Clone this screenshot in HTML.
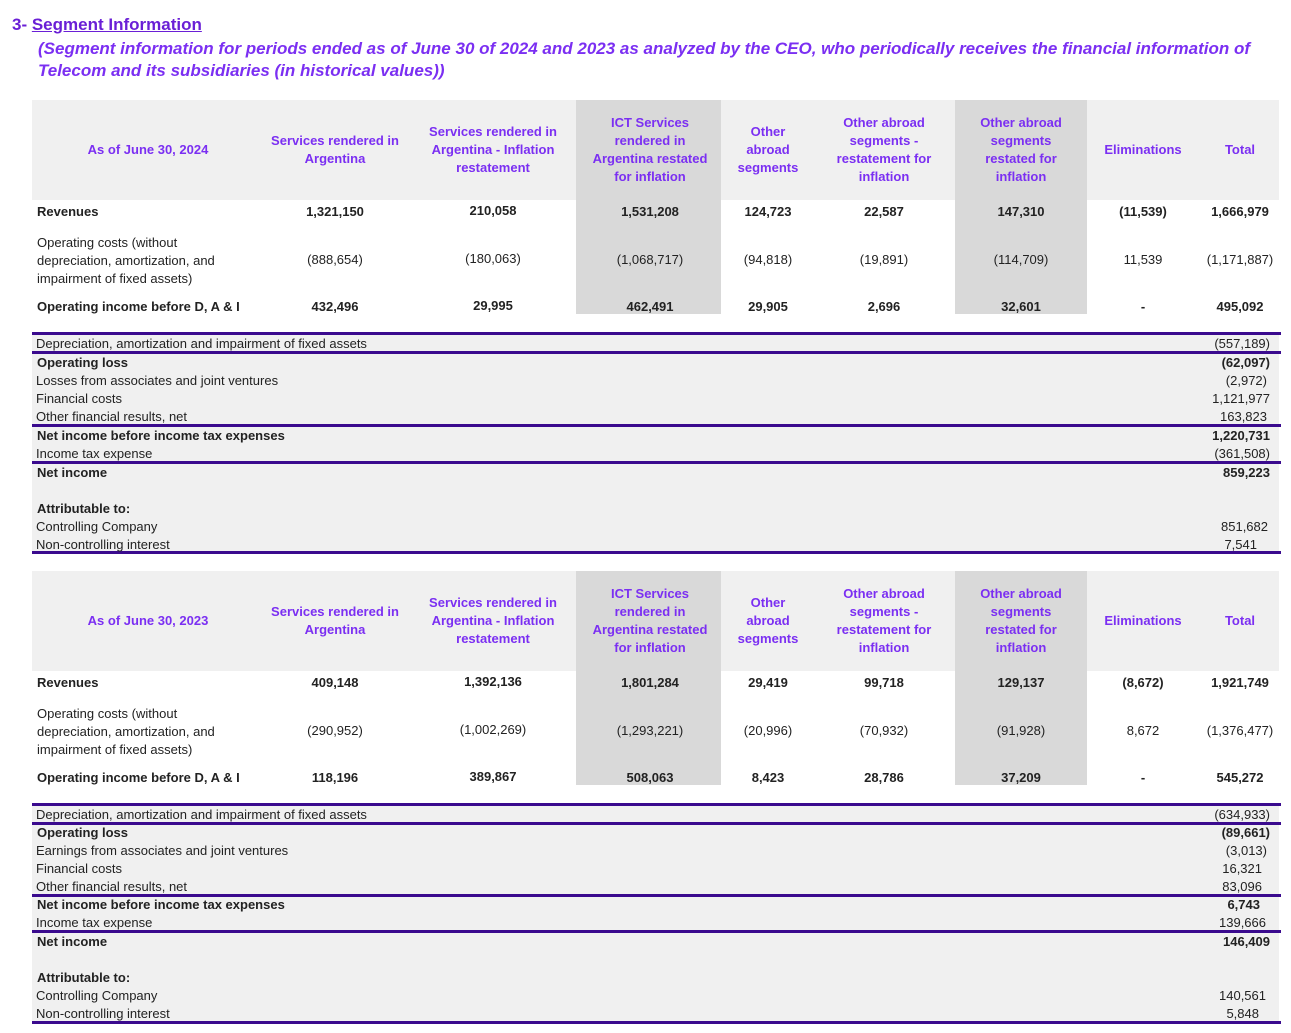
<!DOCTYPE html>
<html><head><meta charset="utf-8"><style>
body{margin:0;width:1291px;height:1033px;background:#fff;position:relative;font-family:"Liberation Sans",sans-serif;color:#222;overflow:hidden}
.a{position:absolute}
.t{position:absolute;white-space:nowrap;font-size:13px;line-height:16px}
.c{position:absolute;width:160px;margin-left:-80px;text-align:center;white-space:nowrap;font-size:13px;line-height:16px}
.h{position:absolute;width:150px;margin-left:-75px;text-align:center;font-size:13px;line-height:18px;color:#7b2ff2;font-weight:bold;display:flex;align-items:center;justify-content:center;height:100px}
.r{position:absolute;right:21px;text-align:right;white-space:nowrap;font-size:13px;line-height:16px}
.b{font-weight:bold}
.ln{position:absolute;left:32px;width:1249px;height:3px;background:#3a0a8e}
</style></head><body>
<div class="a" style="left:12px;top:15px;font-size:17px;font-weight:bold;color:#6a1fd6">3- <span style="text-decoration:underline">Segment Information</span></div>
<div class="a" style="left:38px;top:38px;font-size:17px;font-weight:bold;font-style:italic;color:#7b2ff2;line-height:22px;width:1235px">(Segment information for periods ended as of June 30 of 2024 and 2023 as analyzed by the CEO, who periodically receives the financial information of Telecom and its subsidiaries (in historical values))</div>

<!-- TABLE 1 -->
<div class="a" style="left:32px;top:100px;width:1247px;height:100px;background:#f0f0f0"></div>
<div class="a" style="left:576px;top:100px;width:145px;height:214px;background:#d9d9d9"></div>
<div class="a" style="left:955px;top:100px;width:132px;height:214px;background:#d9d9d9"></div>
<div class="h" style="left:148px;top:100px">As of June 30, 2024</div>
<div class="h" style="left:335px;top:100px">Services rendered in Argentina</div>
<div class="h" style="left:493px;top:100px">Services rendered in Argentina - Inflation restatement</div>
<div class="h" style="left:650px;top:100px;width:126px;margin-left:-63px">ICT Services rendered in Argentina restated for inflation</div>
<div class="h" style="left:768px;top:100px;width:80px;margin-left:-40px">Other abroad segments</div>
<div class="h" style="left:884px;top:100px;width:120px;margin-left:-60px">Other abroad segments - restatement for inflation</div>
<div class="h" style="left:1021px;top:100px;width:110px;margin-left:-55px">Other abroad segments restated for inflation</div>
<div class="h" style="left:1143px;top:100px">Eliminations</div>
<div class="h" style="left:1240px;top:100px">Total</div>

<div class="t b" style="left:37px;top:204px">Revenues</div>
<div class="c b" style="left:335px;top:204px">1,321,150</div><div class="c b" style="left:493px;top:203px">210,058</div><div class="c b" style="left:650px;top:204px">1,531,208</div><div class="c b" style="left:768px;top:204px">124,723</div><div class="c b" style="left:884px;top:204px">22,587</div><div class="c b" style="left:1021px;top:204px">147,310</div><div class="c b" style="left:1143px;top:204px">(11,539)</div><div class="c b" style="left:1240px;top:204px">1,666,979</div>
<div class="t" style="left:37px;top:234px;line-height:18px">Operating costs (without<br>depreciation, amortization, and<br>impairment of fixed assets)</div>
<div class="c" style="left:335px;top:252px">(888,654)</div><div class="c" style="left:493px;top:251px">(180,063)</div><div class="c" style="left:650px;top:252px">(1,068,717)</div><div class="c" style="left:768px;top:252px">(94,818)</div><div class="c" style="left:884px;top:252px">(19,891)</div><div class="c" style="left:1021px;top:252px">(114,709)</div><div class="c" style="left:1143px;top:252px">11,539</div><div class="c" style="left:1240px;top:252px">(1,171,887)</div>
<div class="t b" style="left:37px;top:299px">Operating income before D, A &amp; I</div>
<div class="c b" style="left:335px;top:299px">432,496</div><div class="c b" style="left:493px;top:298px">29,995</div><div class="c b" style="left:650px;top:299px">462,491</div><div class="c b" style="left:768px;top:299px">29,905</div><div class="c b" style="left:884px;top:299px">2,696</div><div class="c b" style="left:1021px;top:299px">32,601</div><div class="c b" style="left:1143px;top:299px">-</div><div class="c b" style="left:1240px;top:299px">495,092</div>

<div class="a" style="left:32px;top:333px;width:1247px;height:220px;background:#f0f0f0"></div>
<div class="ln" style="top:332px"></div><div class="ln" style="top:351px"></div><div class="ln" style="top:424px"></div><div class="ln" style="top:461px"></div><div class="ln" style="top:551px"></div>
<div class="t" style="left:36px;top:336px">Depreciation, amortization and impairment of fixed assets</div><div class="r" style="top:336px">(557,189)</div>
<div class="t b" style="left:37px;top:355px">Operating loss</div><div class="r b" style="top:355px">(62,097)</div>
<div class="t" style="left:36px;top:373px">Losses from associates and joint ventures</div><div class="r" style="top:373px;right:24px">(2,972)</div>
<div class="t" style="left:36px;top:391px">Financial costs</div><div class="r" style="top:391px">1,121,977</div>
<div class="t" style="left:36px;top:409px">Other financial results, net</div><div class="r" style="top:409px;right:24px">163,823</div>
<div class="t b" style="left:37px;top:428px">Net income before income tax expenses</div><div class="r b" style="top:428px">1,220,731</div>
<div class="t" style="left:36px;top:446px">Income tax expense</div><div class="r" style="top:446px">(361,508)</div>
<div class="t b" style="left:37px;top:465px">Net income</div><div class="r b" style="top:465px">859,223</div>
<div class="t b" style="left:37px;top:501px">Attributable to:</div>
<div class="t" style="left:36px;top:519px">Controlling Company</div><div class="r" style="top:519px;right:23px">851,682</div>
<div class="t" style="left:36px;top:537px">Non-controlling interest</div><div class="r" style="top:537px;right:34px">7,541</div>

<!-- TABLE 2 -->
<div class="a" style="left:32px;top:571px;width:1247px;height:100px;background:#f0f0f0"></div>
<div class="a" style="left:576px;top:571px;width:145px;height:214px;background:#d9d9d9"></div>
<div class="a" style="left:955px;top:571px;width:132px;height:214px;background:#d9d9d9"></div>
<div class="h" style="left:148px;top:571px">As of June 30, 2023</div>
<div class="h" style="left:335px;top:571px">Services rendered in Argentina</div>
<div class="h" style="left:493px;top:571px">Services rendered in Argentina - Inflation restatement</div>
<div class="h" style="left:650px;top:571px;width:126px;margin-left:-63px">ICT Services rendered in Argentina restated for inflation</div>
<div class="h" style="left:768px;top:571px;width:80px;margin-left:-40px">Other abroad segments</div>
<div class="h" style="left:884px;top:571px;width:120px;margin-left:-60px">Other abroad segments - restatement for inflation</div>
<div class="h" style="left:1021px;top:571px;width:110px;margin-left:-55px">Other abroad segments restated for inflation</div>
<div class="h" style="left:1143px;top:571px">Eliminations</div>
<div class="h" style="left:1240px;top:571px">Total</div>

<div class="t b" style="left:37px;top:675px">Revenues</div>
<div class="c b" style="left:335px;top:675px">409,148</div><div class="c b" style="left:493px;top:674px">1,392,136</div><div class="c b" style="left:650px;top:675px">1,801,284</div><div class="c b" style="left:768px;top:675px">29,419</div><div class="c b" style="left:884px;top:675px">99,718</div><div class="c b" style="left:1021px;top:675px">129,137</div><div class="c b" style="left:1143px;top:675px">(8,672)</div><div class="c b" style="left:1240px;top:675px">1,921,749</div>
<div class="t" style="left:37px;top:705px;line-height:18px">Operating costs (without<br>depreciation, amortization, and<br>impairment of fixed assets)</div>
<div class="c" style="left:335px;top:723px">(290,952)</div><div class="c" style="left:493px;top:722px">(1,002,269)</div><div class="c" style="left:650px;top:723px">(1,293,221)</div><div class="c" style="left:768px;top:723px">(20,996)</div><div class="c" style="left:884px;top:723px">(70,932)</div><div class="c" style="left:1021px;top:723px">(91,928)</div><div class="c" style="left:1143px;top:723px">8,672</div><div class="c" style="left:1240px;top:723px">(1,376,477)</div>
<div class="t b" style="left:37px;top:770px">Operating income before D, A &amp; I</div>
<div class="c b" style="left:335px;top:770px">118,196</div><div class="c b" style="left:493px;top:769px">389,867</div><div class="c b" style="left:650px;top:770px">508,063</div><div class="c b" style="left:768px;top:770px">8,423</div><div class="c b" style="left:884px;top:770px">28,786</div><div class="c b" style="left:1021px;top:770px">37,209</div><div class="c b" style="left:1143px;top:770px">-</div><div class="c b" style="left:1240px;top:770px">545,272</div>

<div class="a" style="left:32px;top:804px;width:1247px;height:218px;background:#f0f0f0"></div>
<div class="ln" style="top:803px"></div><div class="ln" style="top:822px"></div><div class="ln" style="top:894px"></div><div class="ln" style="top:930px"></div><div class="ln" style="top:1021px"></div>
<div class="t" style="left:36px;top:807px">Depreciation, amortization and impairment of fixed assets</div><div class="r" style="top:807px">(634,933)</div>
<div class="t b" style="left:37px;top:825px">Operating loss</div><div class="r b" style="top:825px">(89,661)</div>
<div class="t" style="left:36px;top:843px">Earnings from associates and joint ventures</div><div class="r" style="top:843px;right:24px">(3,013)</div>
<div class="t" style="left:36px;top:861px">Financial costs</div><div class="r" style="top:861px;right:29px">16,321</div>
<div class="t" style="left:36px;top:879px">Other financial results, net</div><div class="r" style="top:879px;right:29px">83,096</div>
<div class="t b" style="left:37px;top:897px">Net income before income tax expenses</div><div class="r b" style="top:897px;right:31px">6,743</div>
<div class="t" style="left:36px;top:915px">Income tax expense</div><div class="r" style="top:915px;right:25px">139,666</div>
<div class="t b" style="left:37px;top:934px">Net income</div><div class="r b" style="top:934px">146,409</div>
<div class="t b" style="left:37px;top:970px">Attributable to:</div>
<div class="t" style="left:36px;top:988px">Controlling Company</div><div class="r" style="top:988px;right:25px">140,561</div>
<div class="t" style="left:36px;top:1006px">Non-controlling interest</div><div class="r" style="top:1006px;right:32px">5,848</div>
</body></html>
